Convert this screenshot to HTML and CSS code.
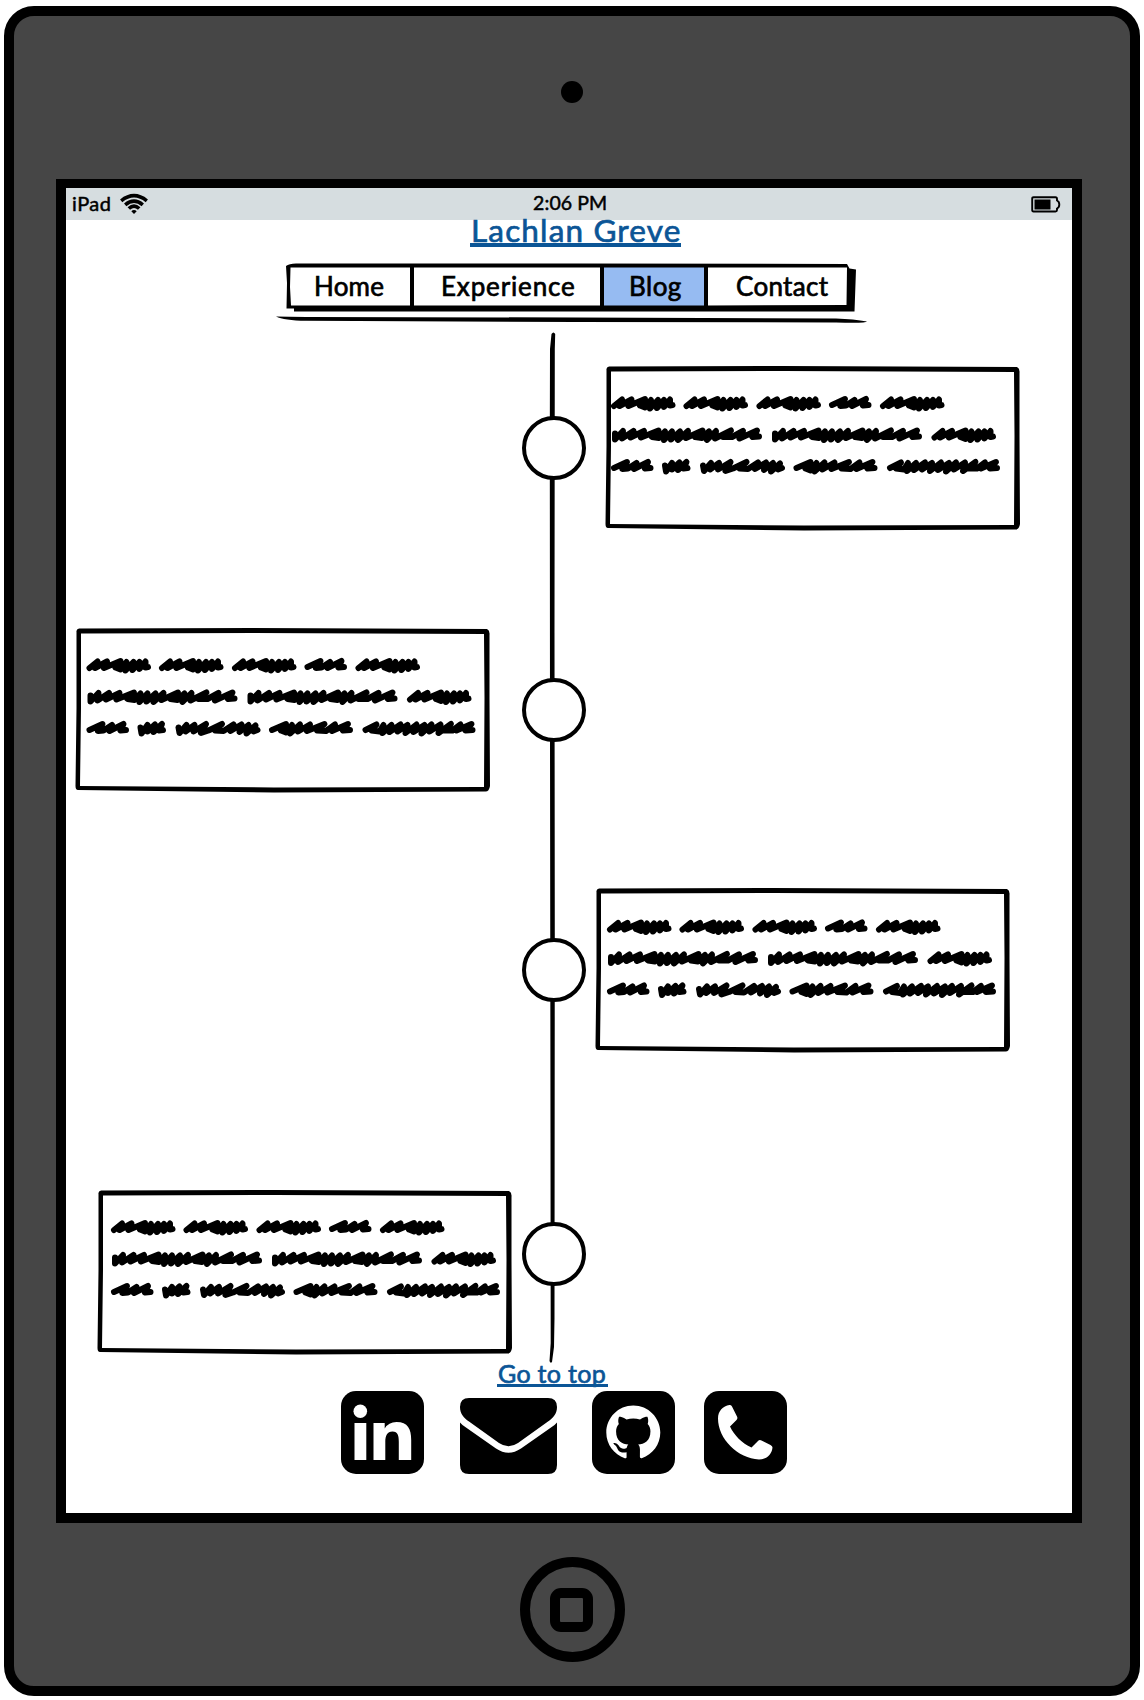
FILE: index.html
```html
<!DOCTYPE html>
<html lang="en">
<head>
<meta charset="utf-8">
<title>Lachlan Greve - Blog</title>
<link rel="stylesheet" href="styles.css">
</head>
<body>
<svg class="defs" width="0" height="0" aria-hidden="true">
  <defs>
    <path id="w64" d="M3 12.500L11 6L8.500 12.500L20.500 6L17.500 12.500L34 5.500L29 12L34 14L40 6.500L39 15L47 6.500L46 14.500L53 6.500L53 13.500L59 6L59 12L61.500 11.500"/>
    <path id="w151" d="M4 8.500L4 14.500L12 6L11 13.500L22.500 6L19.500 12.500L33 6L30 12.500L47.500 5.500L41 12L48 13L54 6.500L53 15L61 6.500L60 14.500L69 6.500L67 15L77 6L75 13L91.500 5.500L84 12L91 13L98 6.500L96 15L105 6L104 13.500L120 5.500L112 12L121 12L132 6L128.500 13.500L146 5.500L141.500 12L148 11.500"/>
    <path id="w42" d="M3 11.500L16 5.500L11.500 12.500L17 12L25.500 6.500L23 12.500L37 5.500L34 12L39.500 11.500"/>
    <path id="w29" d="M4 9L5 15L11 6.500L11 13L18.500 6L17 13.500L25.500 5.500L22.500 12L26.500 11.500"/>
    <path id="w86" d="M4 9L5 14.500L12 6.500L11 13L20 6.500L19 13L31.500 5.500L26.500 14.500L34 12L47.500 5.500L40.500 12L49 12.500L59 6L56 12.500L67 6L65 13.500L74 6.500L72 15L81 7L79 13L83 11.500"/>
    <path id="w84" d="M3 11.500L17 5.500L12 12L17 14L23 6.500L21 15L31 6L29 13L41 6L38 12.500L55.500 5.500L48 12L57 12.500L66 6L63 12.500L79 5.500L74 12L81 11.500"/>
    <path id="w113" d="M3 11.500L14 6L9 12L17 13L21 6.500L20 14.500L29 6.500L27 13.500L38 6L35 13L45 6.500L43 14.500L54 6L51 13.500L62 6.500L59 15L69 6L67 13L78 6L76 14.500L88.500 5.500L82 12L90 12L98 6L94 12L109 5.500L103 12L110 11.500"/>
    <g id="scribble" fill="none" stroke="#000" stroke-width="6" stroke-linecap="round" stroke-linejoin="round">
      <use href="#w64"/><use href="#w64" x="72.500"/><use href="#w64" x="145.500"/><use href="#w42" x="218"/><use href="#w64" x="269"/>
      <use href="#w151" y="31.500"/><use href="#w151" x="160" y="31.500"/><use href="#w64" x="320.500" y="31.500"/>
      <use href="#w42" y="63"/><use href="#w29" x="50" y="63"/><use href="#w86" x="88" y="63"/><use href="#w84" x="182.500" y="63"/><use href="#w113" x="276" y="63"/>
    </g>
    <g id="frame">
      <path d="M2.500 4Q2 1 5 .500L180 0L413 1Q416 2.500 415.500 7L415.500 70L416 158Q415 164 411 163.500L200 164.500L4 162Q1.500 162 1.500 158L2.500 80ZM7 5.500L7 80L6 158L200 159.500L410 159L410.500 70L410 6L180 5Z" fill="#000" fill-rule="evenodd"/>
    </g>
  </defs>
</svg>
<main class="tablet">
  <div class="camera"></div>
  <div class="screen">
    <header class="status">
      <div class="carrier">
        <span>iPad</span>
        <svg width="28" height="20" viewBox="0 0 28 20"><g fill="none" stroke="#000" stroke-width="3.600"><path d="M1.200 6.800Q14-3.400 26.800 6.800"/><path d="M5.200 10.800Q14 3.400 22.800 10.800"/><path d="M8.800 14.500Q14 9.600 19.200 14.500"/></g><path d="M11.300 17.300Q14 14.900 16.700 17.300L14 19.900Z"/></svg>
      </div>
      <span class="clock">2:06 PM</span>
      <svg class="battery" width="30" height="17" viewBox="0 0 30 17"><path d="M2.500 1.200H24.500Q26 1.200 26 3V4.500Q28.300 5.500 28.300 8.500T26 12.500V14Q26 15.500 24.500 15.500H2.500Q1.200 15.500 1.200 14V2.500Q1.200 1.200 2.500 1.200Z" fill="none" stroke="#000" stroke-width="1.900"/><path d="M3.500 3.500h16v10h-16z"/></svg>
    </header>
    <h1 class="title"><a href="#">Lachlan Greve</a></h1>
    <nav class="menu">
      <a class="item home" href="#">Home</a>
      <a class="item experience" href="#">Experience</a>
      <a class="item blog" href="#">Blog</a>
      <a class="item contact" href="#">Contact</a>
      <svg class="menu-frame" width="592" height="60" viewBox="0 0 592 60">
        <path d="M10 3Q13 .500 20 .500L300 .500L571 1L573.500 5.500L580 6.500L578.500 48.500L18 48.500L18 45.500L10.500 45.500L11 20ZM14.500 4.500L14 24L15 42.500H134V4.500ZM138 42.500H324V4.500H138ZM328 42.500H428V4.500H328ZM432 42.500L570.500 42L571 4.500H432Z" fill-rule="evenodd"/>
        <path d="M0 53.500Q12 53.500 30 54L300 54.500L560 55.500Q578 56 591 58.500Q590 60.500 560 59.500L300 59L30 57.800Q8 57.500 0 53.500Z"/>
      </svg>
    </nav>
    <section class="timeline">
      <svg class="spine" width="10" height="1032" viewBox="0 0 10 1032"><path d="M4.500 1Q6.500-2 8.200 1L7.800 16L7.500 300L7.800 600L7.500 985L7 1014L5 1029Q3.500 1031 2.500 1028L3.700 1010L3.500 800L3 400L2.800 100L3 16Z"/></svg>
      <article class="row right">
        <i class="dot"></i>
        <svg class="card" width="418" height="164"><use href="#frame"/><use href="#scribble" x="7" y="27.500"/></svg>
      </article>
      <article class="row left">
        <svg class="card" width="418" height="164"><use href="#frame"/><use href="#scribble" x="12.500" y="27.500"/></svg>
        <i class="dot"></i>
      </article>
      <article class="row right near">
        <i class="dot"></i>
        <svg class="card" width="418" height="164"><use href="#frame"/><use href="#scribble" x="13" y="29"/></svg>
      </article>
      <article class="row left near last">
        <svg class="card" width="418" height="164"><use href="#frame"/><use href="#scribble" x="15" y="27.500"/></svg>
        <i class="dot"></i>
      </article>
    </section>
    <a class="top-link" href="#">Go to top</a>
    <footer class="social">
      <svg width="83" height="83" viewBox="0 0 83 83"><rect width="83" height="83" rx="15"/><g fill="#fff"><circle cx="19.300" cy="20.300" r="6.800"/><path d="M13.500 32H25.300V69H13.500ZM32.500 32H43.700V37.500Q47.500 31 55.500 31C67 31 70.200 38 70.200 49V69H57.800V51C57.800 45 57 40.500 51.500 40.500S44.300 45 44.300 51V69H32.500Z"/></g></svg>
      <svg class="mail" width="97" height="76" viewBox="0 0 97 76"><path d="M9 0H88Q97 0 97 9C97 16 93 20 88 23.500L58 45Q48.500 51.500 39 45L9 23.500C4 20 0 16 0 9Q0 0 9 0ZM0 24.500Q2 27 6 29.500L36 50.500Q48.500 59 61 50.500L91 29.500Q95 27 97 24.500V67Q97 76 88 76H9Q0 76 0 67Z"/></svg>
      <svg width="83" height="83" viewBox="0 0 83 83"><rect width="83" height="83" rx="15"/><path fill="#fff" transform="translate(14.300 13.900) scale(2.250)" d="M12 .297c-6.630 0-12 5.373-12 12 0 5.303 3.438 9.800 8.205 11.385.6.113.82-.258.82-.577 0-.285-.01-1.040-.015-2.040-3.338.724-4.042-1.610-4.042-1.610C4.422 18.070 3.633 17.700 3.633 17.700c-1.087-.744.084-.729.084-.729 1.205.084 1.838 1.236 1.838 1.236 1.070 1.835 2.809 1.305 3.495.998.108-.776.417-1.305.76-1.605-2.665-.3-5.466-1.332-5.466-5.930 0-1.310.465-2.380 1.235-3.220-.135-.303-.54-1.523.105-3.176 0 0 1.005-.322 3.300 1.230.96-.267 1.980-.399 3-.405 1.020.006 2.040.138 3 .405 2.280-1.552 3.285-1.230 3.285-1.230.645 1.653.24 2.873.12 3.176.765.840 1.230 1.910 1.230 3.220 0 4.610-2.805 5.625-5.475 5.920.42.360.81 1.096.81 2.220 0 1.606-.015 2.896-.015 3.286 0 .315.21.690.825.570C20.565 22.092 24 17.592 24 12.297c0-6.627-5.373-12-12-12"/></svg>
      <svg width="83" height="83" viewBox="0 0 83 83"><rect width="83" height="83" rx="15"/><path fill="#fff" d="M25.500 14Q27.300 13.600 28 15.500L33 25.500Q34 27.500 32.500 29L26 35.500C30 44 38 52.500 47.500 56.500L54 50Q55.500 48.500 57.500 49.500L66.500 54Q68.500 55 68.500 56.500C68 63 63 68.500 55 68.500C34 67.500 14 48 14 27.500C14 20 19 15 25.500 14Z"/></svg>
    </footer>
  </div>
  <div class="home-button"><i></i></div>
</main>
</body>
</html>
```
FILE: styles.css
```css
* { box-sizing: border-box; }
body { margin: 0; padding: 6px 4px 4px; background: #fff; color: #000; font-family: Lato, "Open Sans", sans-serif; -webkit-text-stroke: 0.7px currentColor; }
a { color: inherit; text-decoration: none; }
.defs { display: block; }
svg { display: block; overflow: visible; flex: none; }

.tablet { display: flex; flex-direction: column; width: 1136px; height: 1690px; border: 10px solid #000; border-radius: 30px; background: #464646; padding: 65px 38px 0 42px; }
.camera { width: 22px; height: 22px; border-radius: 50%; background: #000; margin: 0 0 76px 505px; flex: none; }
.screen { width: 1026px; height: 1344px; border: 10px solid #000; border-top-width: 9px; background: #fff; flex: none; }

.status { display: grid; grid-template-columns: 1fr auto 1fr; align-items: center; height: 32px; padding: 0 11px 0 6px; background: #d6dde0; font-size: 19.500px; line-height: 20px; -webkit-text-stroke-width: 0.5px; }
.carrier { display: flex; align-items: center; gap: 10px; }
.carrier span { width: 38px; font-size: 20px; letter-spacing: 0.5px; padding-bottom: 2px; }
.clock { width: 72px; margin-left: 5px; padding-bottom: 2px; white-space: nowrap; letter-spacing: 0.1px; }
.battery { justify-self: end; }

.title { margin: -1px 0 0 404px; width: 211px; height: 28px; padding-left: 1px; border-bottom: 4px solid #0b5596; color: #0b5596; font-size: 31.500px; font-weight: 400; line-height: 22px; letter-spacing: 1.150px; white-space: nowrap; }

.menu { position: relative; display: flex; margin: 16px 0 0 222px; height: 46px; padding-top: 4px; font-size: 26px; line-height: 38px; }
.menu-frame { position: absolute; left: -12px; top: 0; }
.item { height: 39px; white-space: nowrap; }
.home { width: 124px; padding-left: 26px; letter-spacing: 0.200px; }
.experience { width: 190px; padding-left: 29px; letter-spacing: 0.850px; }
.blog { width: 104px; padding-left: 27px; background: #96bbf2; letter-spacing: 0.500px; }
.contact { padding-left: 30px; letter-spacing: 0.300px; }

.timeline { position: relative; margin-top: 57px; height: 989px; }
.spine { position: absolute; left: 481px; top: -33px; }
.row { position: relative; display: flex; align-items: center; height: 164px; }
.row + .row { margin-top: 98px; }
.dot { flex: none; width: 64px; height: 64px; border: 4px solid #000; border-radius: 50%; background: #fff; }
.right { padding-left: 456px; gap: 18px; }
.right.near { gap: 8px; }
.row + .row.near { margin-top: 96px; }
.left { padding-left: 8px; gap: 30px; }
.left.near { padding-left: 30px; gap: 8px; }
.row + .row.last { margin-top: 138px; }
.last .dot { margin-bottom: 36px; }

.top-link { display: block; width: 111px; height: 29px; margin: 3px 0 0 431px; padding-left: 1px; border-bottom: 3px solid #0b5596; color: #0b5596; font-size: 25px; line-height: 30px; letter-spacing: 0.300px; white-space: nowrap; }
.social { display: flex; align-items: flex-end; margin: 4px 0 0 275px; }
.social .mail { margin: 0 35.500px 0 35.500px; }
.social svg:last-child { margin-left: 28.500px; }

.home-button { display: grid; place-items: center; width: 105px; height: 105px; border: 10px solid #000; border-radius: 50%; margin: 34px 0 0 463.500px; flex: none; }
.home-button i { width: 43px; height: 44px; border: 10px solid #000; border-radius: 11px; margin-right: 1px; }
```
